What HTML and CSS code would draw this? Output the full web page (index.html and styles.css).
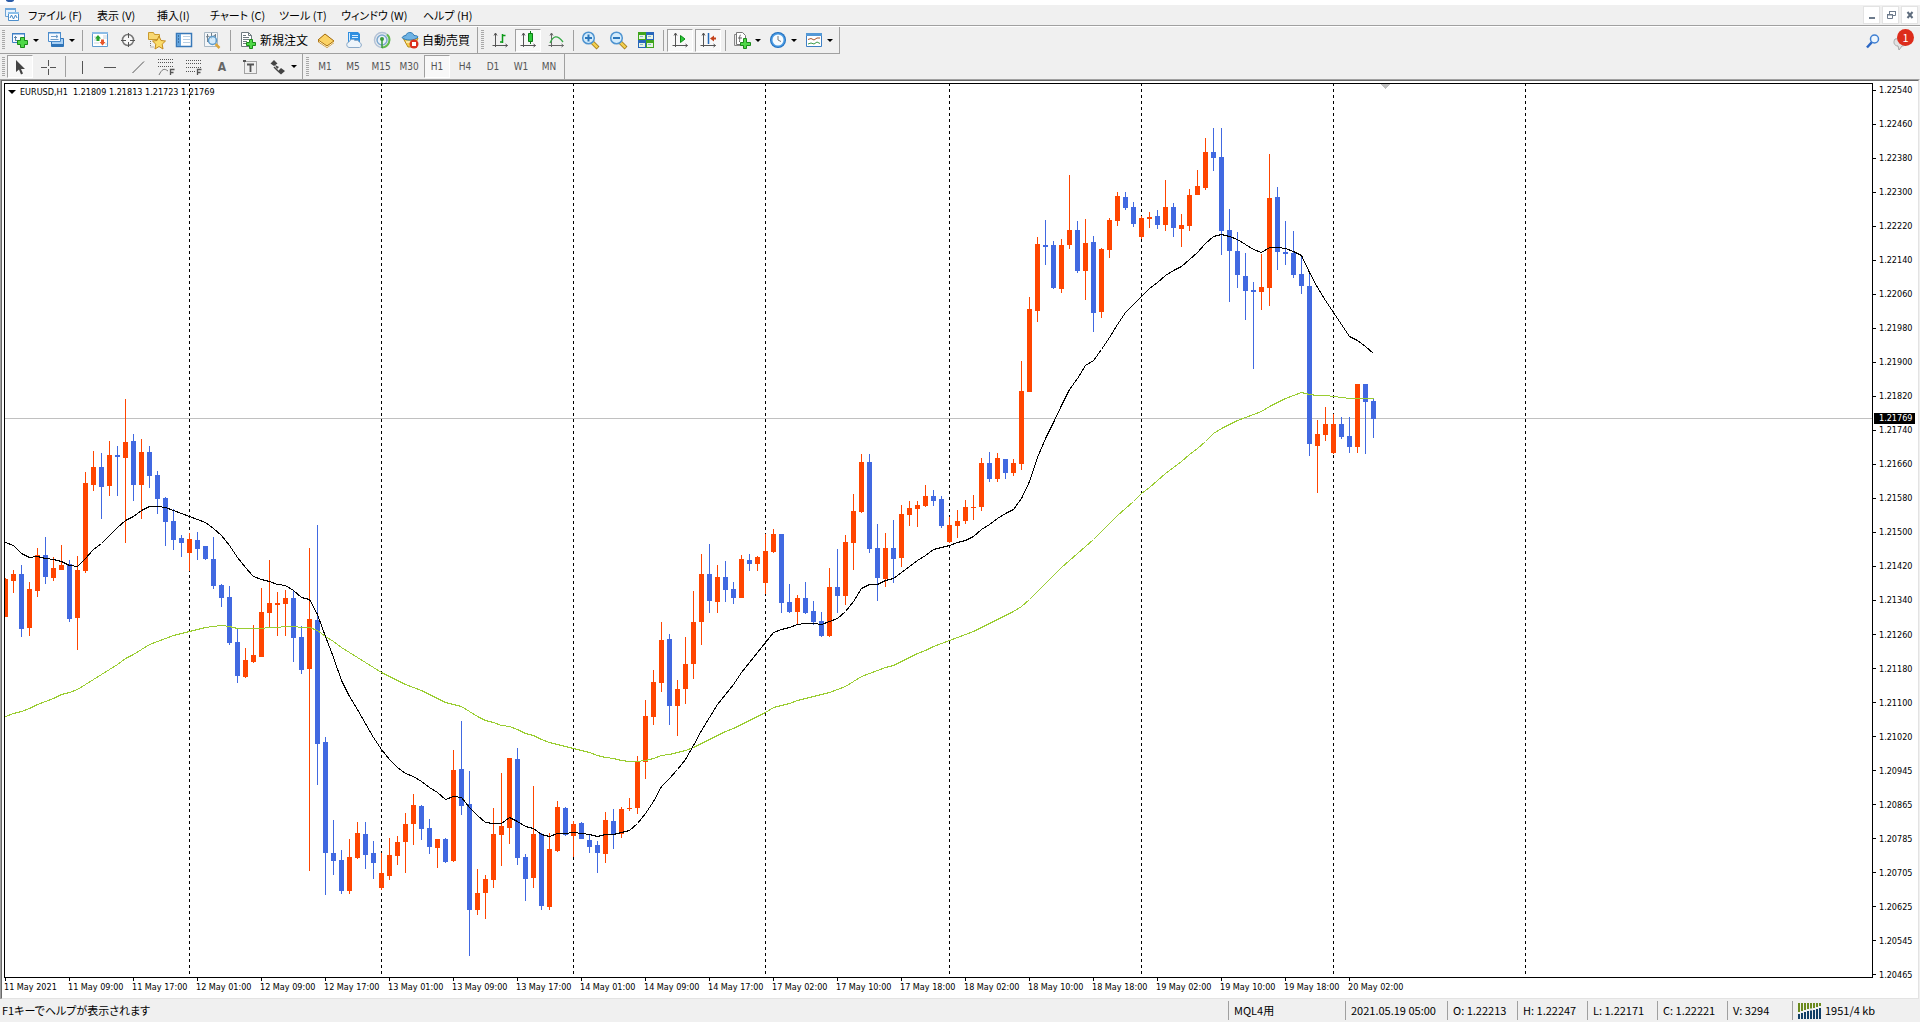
FILE: index.html
```html
<!DOCTYPE html>
<html lang="ja">
<head>
<meta charset="utf-8">
<title>EURUSD,H1</title>
<link rel="stylesheet" href="styles.css">
</head>
<body>
<div class="titlebar"><svg width="20" height="5" viewBox="0 0 20 5"><ellipse cx="10" cy="0" rx="4" ry="2" fill="#2a5ca8"/></svg></div>

<header class="menubar">
  <svg class="app-icon" width="16" height="16" viewBox="0 0 16 16"><path d="M1.500 1.500h10v8h-10z" fill="#eaf4fd" stroke="#6fa3d4"/><path d="M1 1h11v2H1z" fill="#6fa8dc"/><path d="M4.500 5.500h10v8h-10z" fill="#fff" stroke="#4d8fcc"/><path d="M4 5h11v2H4z" fill="#8cc0ea"/><path d="M6 11l1.500-3 2 4 2-4 1.500 3" fill="none" stroke="#3f86c6"/></svg>
  <nav class="menus">
    <button>ファイル (F)</button><button>表示 (V)</button><button>挿入(I)</button><button>チャート (C)</button><button>ツール (T)</button><button>ウィンドウ (W)</button><button>ヘルプ (H)</button>
  </nav>
  <div class="window-buttons">
    <button aria-label="最小化"><svg width="14" height="14" viewBox="0 0 14 14"><path d="M4 9h6v2H4z" fill="#6d7b8c"/></svg></button>
    <button aria-label="元に戻す"><svg width="14" height="14" viewBox="0 0 14 14"><path d="M5.500 6V3.500h6v4H9M3.500 6.500h5v4h-5z" fill="none" stroke="#6d7b8c"/><path d="M5 3h7v1H5zM3 6h6v1.500H3z" fill="#6d7b8c"/></svg></button>
    <button aria-label="閉じる"><svg width="14" height="14" viewBox="0 0 14 14"><path d="M4.500 4l5 6M9.500 4l-5 6" stroke="#5f6d7e" stroke-width="2"/></svg></button>
  </div>
</header>

<div class="toolbars">
  <div class="toolbar-row">
    <div class="toolbar standard">
      <i class="grip"></i>
      <button class="drop" aria-label="新規チャート"><svg viewBox="0 0 20 20"><path d="M2.500 3.500h12v9h-12z" fill="#f4f9ff" stroke="#3d7fc4"/><path d="M2 3h13v1.500H2z" fill="#3d7fc4"/><path d="M5.500 6v5M4 7.500h3M5 10.500h3" stroke="#5b84a8"/><path d="M10.500 7.500h4v3h3v4h-3v3h-4v-3h-3v-4h3z" fill="#4fd848" stroke="#1c8a1a"/></svg><i class="arrow"></i></button>
      <button class="drop" aria-label="プロファイル"><svg viewBox="0 0 20 20"><path d="M5.500 8.500h12v8h-12z" fill="#a9d0f4" stroke="#2f74b8"/><path d="M6 14h11v2H6z" fill="#2f74b8"/><path d="M2.500 2.500h12v9h-12z" fill="#f4f9ff" stroke="#4b8ccc"/><path d="M2 2h13v1.500H2z" fill="#4b8ccc"/><path d="M5 6.500h7M10 5l2 1.500L10 8M4.500 9.500h8" stroke="#6d9cc8" fill="none"/></svg><i class="arrow"></i></button>
      <i class="sep"></i>
      <button aria-label="気配値表示"><svg viewBox="0 0 20 20"><path d="M2.500 2.500h15v14h-15z" fill="#fff" stroke="#5f9bd0"/><path d="M2 2h16v2H2z" fill="#8dbce6"/><path d="M4 7h3m-3 3h3m-3 3h5m4-5h4m0-2h-4m2 8h2" stroke="#c9d5df"/><path d="M8 5l3 3.500H9.500V11h-3V8.500H5z" fill="#27a32b"/><path d="M12.500 15.500L9.500 12H11V9.500h3V12h1.500z" fill="#e8562a"/></svg></button>
      <button aria-label="データウィンドウ"><svg viewBox="0 0 20 20"><circle cx="10" cy="10" r="5.500" fill="#f8f8f8" stroke="#777" stroke-width="1.500"/><path d="M10.500 3v5M10.500 12v5M3 10.500h5M12 10.500h5" stroke="#555"/></svg></button>
      <button aria-label="ナビゲーター"><svg viewBox="0 0 20 20"><path d="M2.500 2.500h5l1 2h5v5h-11z" fill="#f8d873" stroke="#c99a2e"/><path d="M4.500 11v6h4" fill="none" stroke="#777" stroke-dasharray="1 1"/><path d="M13 6l2 4.500 4.500.5-3.300 3.200.8 4.800-4-2.500L9 19l.8-4.800L6.500 11l4.500-.5z" fill="#fbdc6a" stroke="#c48a1b"/></svg></button>
      <button aria-label="ターミナル"><svg viewBox="0 0 20 20"><path d="M2.500 3.500h15v13h-15z" fill="#fff" stroke="#3878b8" stroke-width="1.500"/><path d="M3 4h4v12H3z" fill="#62a3dd"/><path d="M4 6h1M4 9h1M4 12h1" stroke="#173c66"/><path d="M9 6.500h7M9 9.500h7M9 12.500h7" stroke="#b8cfe4"/></svg></button>
      <button aria-label="ストラテジーテスター"><svg viewBox="0 0 20 20"><path d="M2.500 2.500h13v14h-13z" fill="#f4f6f8" stroke="#a9b8c4"/><path d="M5.500 4v8M9.500 3v6M13.500 4v8M4 7l2-1 3 2 4-3" fill="none" stroke="#71808c"/><path d="M13.500 14l4 4" stroke="#dba63d" stroke-width="2.500"/><circle cx="10.500" cy="10.500" r="4" fill="#cce8fb" fill-opacity=".8" stroke="#5d9bcb" stroke-width="1.500"/></svg></button>
      <i class="sep"></i>
      <button class="labelled"><svg viewBox="0 0 20 20"><path d="M3.500 2.500h7l3 3v11h-10z" fill="#fff" stroke="#6e7a80"/><path d="M10.500 2.500v3h3M5 7.500h6M5 9.500h6M5 11.500h4M5 13.500h3M5 5.500h3" fill="none" stroke="#6e7a80"/><path d="M11.500 9.500h3v3h3v3h-3v3h-3v-3h-3v-3h3z" fill="#4fd848" stroke="#1c8a1a"/></svg><span>新規注文</span></button>
      <button aria-label="メタエディター"><svg viewBox="0 0 20 20"><path d="M2 10l7-6 9 7v2l-7 5-9-6z" fill="#b87a14"/><path d="M2 10l7-6 9 7-7 5z" fill="#fbd366" stroke="#a66f14"/><path d="M3 11.500l8 5.500 7-5" fill="none" stroke="#fff4c4"/></svg></button>
      <button aria-label="クラウド"><svg viewBox="0 0 20 20"><path d="M4 2h10l2 2v8H4z" fill="#2f8fe0"/><path d="M5.500 3v8M8 5.500h6M8 7.500h6" stroke="#d5ecff"/><path d="M5 17.500a2.800 2.800 0 0 1 0-5.500 3.500 3.500 0 0 1 6-1.500 3.500 3.500 0 0 1 4.500 2 2.600 2.600 0 0 1 0 5z" fill="#eef5fb" stroke="#8aa9c8"/></svg></button>
      <button aria-label="シグナル"><svg viewBox="0 0 20 20"><circle cx="10" cy="10" r="7.500" fill="none" stroke="#b3c2d6" stroke-width="1.500"/><circle cx="10" cy="10" r="5" fill="#e8f0f8" stroke="#7da8cf" stroke-width="1.500"/><path d="M10 17.500a7.500 7.500 0 0 0 5-13" fill="none" stroke="#62bb4d" stroke-width="2"/><circle cx="10" cy="9" r="2" fill="#3a9a3a"/><path d="M10 10v8" stroke="#3a9a3a" stroke-width="1.500"/></svg></button>
      <button class="labelled"><svg viewBox="0 0 20 20"><path d="M3 8l5 9h6l4-9z" fill="#f6cf4b" stroke="#b98a1c"/><path d="M6 12h5" stroke="#fff"/><path d="M2 7.500c1-1.500 3-2 4-2 .5-4 7-4 8 0 2 0 4 .5 4 1.500-3 4-13 4-16 .5z" fill="#6fb3e4" stroke="#2e79b4"/><circle cx="14" cy="14" r="4.500" fill="#dc2f1d"/><path d="M12 12h4v4h-4z" fill="#fff"/></svg><span>自動売買</span></button>
    </div>
    <div class="toolbar charts">
      <i class="grip"></i>
      <button aria-label="バーチャート"><svg viewBox="0 0 20 20"><path d="M5.500 3v14M2.500 15.500h15M4 5.500l1.500-2.500L7 5.500M15.500 14l2 1.500-2 1.500" fill="none" stroke="#555"/><path d="M12.500 4v9M12.500 5.500h3M10 12h2.500" fill="none" stroke="#0b9a18" stroke-width="1.500"/></svg></button>
      <button class="pressed" aria-label="ローソク足"><svg viewBox="0 0 20 20"><path d="M5.500 3v14M2.500 15.500h15M4 5.500l1.500-2.500L7 5.500M15.500 14l2 1.500-2 1.500" fill="none" stroke="#555"/><path d="M12.500 1v13" stroke="#0c7a14"/><path d="M10.500 3.500h4v8h-4z" fill="#2ecb3b" stroke="#0c7a14"/></svg></button>
      <button aria-label="ラインチャート"><svg viewBox="0 0 20 20"><path d="M5.500 3v14M2.500 15.500h15M4 5.500l1.500-2.500L7 5.500M15.500 14l2 1.500-2 1.500" fill="none" stroke="#666"/><path d="M4 13c3-7 7-9 13-1" fill="none" stroke="#35a845" stroke-width="1.300"/></svg></button>
      <i class="sep"></i>
      <button aria-label="ズームイン"><svg viewBox="0 0 20 20"><path d="M12 12l6 6" stroke="#9c7415" stroke-width="4"/><path d="M12 12l5.500 5.500" stroke="#f1ce4e" stroke-width="2.500"/><circle cx="8.500" cy="8" r="5.800" fill="#d4ecfc" stroke="#4f94d0" stroke-width="1.500"/><path d="M5 8h7M8.500 4.500v7" stroke="#2b76ba" stroke-width="2"/></svg></button>
      <button aria-label="ズームアウト"><svg viewBox="0 0 20 20"><path d="M12 12l6 6" stroke="#9c7415" stroke-width="4"/><path d="M12 12l5.500 5.500" stroke="#f1ce4e" stroke-width="2.500"/><circle cx="8.500" cy="8" r="5.800" fill="#d4ecfc" stroke="#4f94d0" stroke-width="1.500"/><path d="M5 8h7" stroke="#2b76ba" stroke-width="2"/></svg></button>
      <button aria-label="ウィンドウの整列"><svg viewBox="0 0 20 20"><path d="M2 2h8v8H2zM10 10h8v8h-8z" fill="#3fa51e"/><path d="M10 2h8v8h-8zM2 10h8v8H2z" fill="#2766ba"/><path d="M3 5h6v4H3zM11 5h6v4h-6zM3 13h6v4H3zM11 13h6v4h-6z" fill="#e8f4e2"/><path d="M4 6.500h3M12 6.500h3M4 14.500h3M12 14.500h3" stroke="#88b8d0"/></svg></button>
      <i class="sep"></i>
      <button class="pressed" aria-label="自動スクロール"><svg viewBox="0 0 20 20"><path d="M5.500 3v14M2.500 15.500h15M4 5.500l1.500-2.500L7 5.500M15.500 14l2 1.500-2 1.500" fill="none" stroke="#555"/><path d="M10.500 5.500l4.500 3.500-4.500 3.500z" fill="#2ecb3b" stroke="#0c8a14"/></svg></button>
      <button class="pressed" aria-label="チャートシフト"><svg viewBox="0 0 20 20"><path d="M5.500 3v14M2.500 15.500h15M4 5.500l1.500-2.500L7 5.500M15.500 14l2 1.500-2 1.500" fill="none" stroke="#555"/><path d="M10.500 3v11" stroke="#2469b8" stroke-width="1.500"/><path d="M12 8.500l4-3v2h2v2h-2v2z" fill="#c4431c"/></svg></button>
      <i class="sep"></i>
      <button class="drop" aria-label="インディケータ"><svg viewBox="0 0 20 20"><path d="M2.500 4.500h9v11h-9z" fill="#eee" stroke="#888"/><path d="M4.500 2.500h6l3 3v9h-9z" fill="#fff" stroke="#777"/><path d="M9 5c-2 0-1 3-1.500 7M6 8h4" fill="none" stroke="#666"/><path d="M11.500 8.500h3v4h4v3h-4v3h-3v-3h-3v-3h3z" fill="#4fd848" stroke="#1c8a1a"/></svg><i class="arrow"></i></button>
      <button class="drop" aria-label="時間足設定"><svg viewBox="0 0 20 20"><circle cx="10" cy="10" r="8" fill="#1f6fc0"/><circle cx="10" cy="10" r="7" fill="#4b9be2"/><circle cx="10" cy="10" r="5.500" fill="#f6fbff"/><path d="M10 6v4l3 1.500" fill="none" stroke="#777"/></svg><i class="arrow"></i></button>
      <button class="drop" aria-label="定型チャート"><svg viewBox="0 0 20 20"><path d="M2.500 3.500h15v13h-15z" fill="#fff" stroke="#3d7fc4"/><path d="M2 3h16v3H2z" fill="#5599d6"/><path d="M4 9.500l3-1 3 1.500 3-2h3" fill="none" stroke="#a6552c"/><path d="M4 14l3-1 3 1 3-2 3 1.500" fill="none" stroke="#3c9b4a"/></svg><i class="arrow"></i></button>
    </div>
    <div class="alerts">
      <button aria-label="検索"><svg viewBox="0 0 20 20"><path d="M9 11l-5 5.500" stroke="#2a66c4" stroke-width="2.500"/><circle cx="11.500" cy="8" r="4" fill="#eef6fd" stroke="#3f7fd2" stroke-width="1.500"/></svg></button>
      <button class="chat" aria-label="通知"><svg viewBox="0 0 20 20"><path d="M3 8c-2 3-1 7 3 7l1 4 3-4c5 0 6-6 3-8z" fill="#e2e2e2" stroke="#a8a8a8"/></svg><span class="badge">1</span></button>
    </div>
  </div>
  <div class="toolbar-row second">
    <div class="toolbar lines">
      <i class="grip"></i>
      <button class="pressed" aria-label="カーソル"><svg viewBox="0 0 20 20"><path d="M6 3v12l3-2.500 2 5 2-1-2-4.500h4z" fill="#444"/></svg></button>
      <button aria-label="十字カーソル"><svg viewBox="0 0 20 20"><path d="M10.500 3v6M10.500 12v6M3 10.500h6M12 10.500h6" stroke="#555"/></svg></button>
      <i class="sep"></i>
      <button aria-label="垂直線"><svg viewBox="0 0 20 20"><path d="M10.500 4v13" stroke="#555"/></svg></button>
      <button aria-label="水平線"><svg viewBox="0 0 20 20"><path d="M4 10.500h12" stroke="#555"/></svg></button>
      <button aria-label="トレンドライン"><svg viewBox="0 0 20 20"><path d="M4.500 16L16 4.500" stroke="#555"/></svg></button>
      <button aria-label="フィボナッチ"><svg viewBox="0 0 20 20"><path d="M2 2.500h16M2 5.500h16M2 9.500h16" stroke="#555" stroke-dasharray="1 1"/><path d="M3 18c3-6 5-7 9-4" fill="none" stroke="#777"/><path d="M14.500 18v-5.500h4M14.500 15.500h3" fill="none" stroke="#555" stroke-width="1.300"/></svg></button>
      <button aria-label="フィボナッチファン"><svg viewBox="0 0 20 20"><path d="M2 3.500h15M2 6.500h15M2 10.500h15M2 14.500h10" stroke="#555" stroke-dasharray="1 1"/><path d="M13.500 18v-5.500h4M13.500 15.500h3" fill="none" stroke="#555" stroke-width="1.300"/></svg></button>
      <button class="letter" aria-label="テキスト">A</button>
      <button aria-label="テキストラベル"><svg viewBox="0 0 20 20"><path d="M4.500 4.500h12v12h-12z" fill="none" stroke="#555" stroke-dasharray="1 1"/><path d="M3 3h3v2H3z" fill="#555"/><path d="M7 7.500h7M10.500 7v8" stroke="#555" stroke-width="1.800"/></svg></button>
      <button class="drop" aria-label="矢印"><svg viewBox="0 0 20 20"><path d="M6 3l3.500 3.500L6 9 2.500 6.500zM7 8l4 2-2 2zM13 11l4 3-4 3.500-3.500-3z" fill="#444"/><path d="M6 10l4 4" stroke="#444" stroke-width="1.500"/></svg><i class="arrow"></i></button>
    </div>
    <div class="toolbar periods">
      <i class="grip"></i>
      <button>M1</button><button>M5</button><button>M15</button><button>M30</button><button class="pressed">H1</button><button>H4</button><button>D1</button><button>W1</button><button>MN</button>
    </div>
  </div>
</div>

<main class="chart-window">
  <div class="chart-grid">
    <section class="plot">
      <svg id="chart" viewBox="5 84 1867 893" preserveAspectRatio="none" shape-rendering="crispEdges" role="img" aria-label="EURUSD,H1"></svg>
      <h1 class="chart-title"><i class="arrow"></i>EURUSD,H1 &nbsp;1.21809 1.21813 1.21723 1.21769</h1>
    </section>
    <div class="price-scale">
      <ol>
        <li>1.22540</li><li>1.22460</li><li>1.22380</li><li>1.22300</li><li>1.22220</li><li>1.22140</li><li>1.22060</li><li>1.21980</li><li>1.21900</li><li>1.21820</li><li>1.21740</li><li>1.21660</li><li>1.21580</li><li>1.21500</li><li>1.21420</li><li>1.21340</li><li>1.21260</li><li>1.21180</li><li>1.21100</li><li>1.21020</li><li>1.20945</li><li>1.20865</li><li>1.20785</li><li>1.20705</li><li>1.20625</li><li>1.20545</li><li>1.20465</li>
      </ol>
      <span class="price-tag">1.21769</span>
    </div>
    <ol class="time-scale">
      <li>11 May 2021</li><li>11 May 09:00</li><li>11 May 17:00</li><li>12 May 01:00</li><li>12 May 09:00</li><li>12 May 17:00</li><li>13 May 01:00</li><li>13 May 09:00</li><li>13 May 17:00</li><li>14 May 01:00</li><li>14 May 09:00</li><li>14 May 17:00</li><li>17 May 02:00</li><li>17 May 10:00</li><li>17 May 18:00</li><li>18 May 02:00</li><li>18 May 10:00</li><li>18 May 18:00</li><li>19 May 02:00</li><li>19 May 10:00</li><li>19 May 18:00</li><li>20 May 02:00</li>
    </ol>
  </div>
</main>

<footer class="statusbar">
  <span class="hint">F1キーでヘルプが表示されます</span>
  <span class="cell profile">MQL4用</span>
  <span class="cell date">2021.05.19 05:00</span>
  <span class="cell ohlc">O: 1.22213</span>
  <span class="cell ohlc">H: 1.22247</span>
  <span class="cell ohlc">L: 1.22171</span>
  <span class="cell ohlc">C: 1.22221</span>
  <span class="cell volume">V: 3294</span>
  <span class="cell traffic"><svg width="23" height="16" viewBox="0 0 23 16"><path d="M1 0v9M4 0v8M7 0v7M10 0v6M13 0v5.500M16 0v5M19 0v4M22 0v3" stroke="#6b8a1e" stroke-width="2"/><path d="M1 16v-5M4 16v-6M7 16v-7M10 16v-8M13 16V7.500M16 16V7M19 16V6M22 16V5" stroke="#123f66" stroke-width="2"/></svg>1951/4 kb</span>
</footer>
<script src="chart.js"></script>
</body>
</html>
```
FILE: styles.css
```css
* { box-sizing: border-box; }
body {
  margin: 0;
  height: 100vh;
  display: flex;
  flex-direction: column;
  background: #f0f0f0;
  color: #000;
  font: 12px/16px "Noto Sans CJK JP", sans-serif;
  font-feature-settings: "palt";
  overflow: hidden;
}
button {
  margin: 0;
  padding: 0;
  border: 0;
  background: none;
  color: inherit;
  font: inherit;
  font-feature-settings: inherit;
}
ol { margin: 0; padding: 0; list-style: none; }
svg { display: block; }

.titlebar { flex: none; height: 5px; background: #fff; }

.menubar {
  flex: none;
  height: 21px;
  display: flex;
  align-items: center;
  padding: 0 2px 0 4px;
  border-bottom: 1px solid #a0a0a0;
}
.menus {
  margin-left: 8px;
  display: grid;
  grid-template-columns: 69px 60px 53px 69px 62px 82px 60px;
  flex: 1;
  font-size: 11px;
}
.menus button { text-align: left; white-space: nowrap; }
.window-buttons { display: flex; gap: 2px; }
.window-buttons button {
  width: 17px;
  height: 18px;
  display: grid;
  place-items: center;
  background: #fff;
  border: 1px solid #e3e3e3;
}

.toolbars { flex: none; border-top: 1px solid #fff; }
.toolbar-row { display: flex; height: 27px; }
.toolbar-row.second { height: 25px; }
.toolbar {
  display: flex;
  align-items: center;
  border-right: 1px solid #a0a0a0;
  border-bottom: 1px solid #a0a0a0;
}
.second .toolbar { border-bottom: 0; }
.standard { padding-right: 3px; }
.charts { padding-right: 3px; }
.lines { padding-right: 2px; }
.periods { padding-right: 1px; }
.toolbar .grip {
  width: 3px;
  height: 20px;
  margin: 0 1px 0 2px;
  background: repeating-linear-gradient(#a8a8a8 0 1px, #f0f0f0 1px 2px);
}
.charts .grip, .periods .grip { margin: 0 2px 0 3px; }
.toolbar .sep { width: 6px; height: 21px; background: linear-gradient(#a0a0a0, #a0a0a0) 3px 0 / 1px 100% no-repeat; }
.standard .sep { width: 8px; background-position: 4px 0; }
.toolbar button {
  width: 28px;
  height: 23px;
  display: flex;
  align-items: center;
  justify-content: center;
}
.toolbar svg { flex: none; width: 20px; height: 20px; }
.toolbar .drop { width: 36px; justify-content: flex-start; padding-left: 4px; gap: 3px; }
.toolbar .labelled { width: 78px; justify-content: flex-start; padding-left: 4px; gap: 2px; white-space: nowrap; }
.arrow {
  flex: none;
  width: 5px;
  border: solid transparent;
  border-width: 3px 3px 0;
  border-top-color: #000;
}
.toolbar .pressed {
  width: 26px;
  margin: 0 1px;
  background: #f8f8f8;
  border: 1px solid #fff;
  border-top-color: #a0a0a0;
  border-left-color: #a0a0a0;
}
.toolbar .letter { font: bold 12px/16px "DejaVu Sans Condensed", sans-serif; color: #666; }
.periods button { font: 10px/16px "DejaVu Sans Condensed", "DejaVu Sans", sans-serif; color: #555; }
.alerts { margin-left: auto; display: flex; align-items: center; gap: 9px; padding-right: 8px; }
.alerts svg { width: 20px; height: 20px; }
.chat { position: relative; }
.badge {
  position: absolute;
  top: -2px;
  right: -2px;
  width: 17px;
  height: 17px;
  border-radius: 50%;
  background: #dd2c1b;
  color: #fff;
  font-size: 11px;
  line-height: 17px;
  text-align: center;
}

.chart-window {
  flex: 1;
  min-height: 0;
  display: flex;
  border: 1px solid #a0a0a0;
  border-right-color: #f0f0f0;
  border-bottom: 0;
}
.chart-grid {
  flex: 1;
  min-width: 0;
  display: grid;
  grid-template: minmax(0, 1fr) 20px / minmax(0, 1fr) 45px;
  padding: 2px 0 0 2px;
  background: #fff;
  border: 1px solid #696969;
  border-right-color: #e3e3e3;
  border-bottom-color: #e3e3e3;
  font: 9px/10px "DejaVu Sans Condensed", "DejaVu Sans", sans-serif;
}
.plot { position: relative; border: 1px solid #000; }
.plot svg { width: 100%; height: 100%; }
.chart-title {
  position: absolute;
  top: 3px;
  left: 3px;
  margin: 0;
  display: flex;
  align-items: center;
  gap: 4px;
  font: inherit;
}
.chart-title .arrow { width: 7px; border-width: 4px 4px 0; }

.price-scale { position: relative; grid-row: 1 / 3; grid-column: 2; display: flex; padding: 2px 0 18px; }
.price-scale ol { display: flex; flex-direction: column; justify-content: space-between; }
.price-scale li { display: flex; align-items: center; gap: 3px; }
.price-scale li::before { content: ""; width: 3px; height: 1px; background: #000; }
.price-tag {
  position: absolute;
  top: 330px;
  left: 1px;
  width: 41px;
  padding-left: 5px;
  background: #000;
  color: #fff;
  line-height: 11px;
}
.time-scale { display: flex; overflow: hidden; }
.time-scale li { flex: none; width: 64px; white-space: nowrap; }
.time-scale li::before { content: ""; display: block; width: 1px; height: 3px; margin: 0 0 1px 1px; background: #000; }

.statusbar {
  flex: none;
  height: 23px;
  display: flex;
  align-items: stretch;
  padding: 2px 0 2px 2px;
  font-size: 11px;
  line-height: 19px;
  white-space: nowrap;
}
.hint { flex: 1; }
.cell { border-left: 1px solid #a0a0a0; padding-left: 5px; }
.profile { width: 117px; }
.date { width: 102px; }
.ohlc { width: 70px; }
.volume { width: 65px; }
.traffic { width: 128px; display: flex; align-items: center; gap: 4px; }

.guide { stroke: #000; stroke-dasharray: 3 3; stroke-dashoffset: 1; }
.current { fill: #c0c0c0; }
.up { fill: #ff4500; }
.down { fill: #4169e1; }
.fast { fill: none; stroke: #000; }
.slow { fill: none; stroke: #9acd32; }
```
FILE: chart.js
```js
// One bar per entry: direction, high, body top, body bottom, low (chart units).
const bars = `R578,579,617,617 R570,574,581,593 B565,574,629,637 R582,589,628,636 R548,555,591,597 B537,555,577,584 R557,568,578,581 R545,565,570,570 B560,564,619,622 R556,570,618,650
R472,483,571,573 R451,467,485,491 B453,467,487,519 R441,455,486,496 B446,455,457,496 R399,442,458,543 B434,441,485,501 R439,452,485,519 B446,452,476,488 B471,475,499,514
B497,498,522,546 B509,521,540,550 B535,538,543,557 R533,539,553,571 B532,540,549,560 B546,546,559,560 B537,559,586,589 B584,585,598,607 B586,597,643,645 B628,642,676,683
R648,660,677,678 R625,655,662,663 R588,612,657,657 R560,603,613,628 R592,603,605,636 R590,598,604,636 B590,598,638,662 B626,637,670,674 R548,619,669,871 B525,620,744,785
B737,742,853,895 B820,853,861,875 B850,860,891,894 R839,857,891,894 R822,833,858,859 B822,834,855,869 B841,853,863,879 R853,873,888,890 R838,855,876,880 R836,842,856,865
R813,824,842,873 R794,805,824,845 B805,806,829,840 B819,828,847,854 R839,839,848,868 B838,839,862,863 R750,770,861,862 B721,769,806,815 B771,804,910,956 R869,893,910,915
R875,879,893,919 R808,834,880,888 R773,826,835,866 R758,758,828,844 B748,759,858,865 B854,857,879,901 R786,834,878,888 B833,834,906,910 R833,849,907,910 R801,807,851,852
B807,808,835,836 R821,824,836,857 B822,823,839,839 B835,840,847,853 B841,845,853,873 R812,820,854,863 B809,821,834,849 R807,809,834,838 R798,808,809,811 R756,761,808,814
R700,716,762,779 R670,682,717,725 R622,640,683,692 B634,639,706,725 R680,689,706,736 R637,664,689,704 R591,622,664,679 R554,574,622,645 B544,574,601,613 R565,577,602,613
B561,577,590,602 B582,589,598,604 R555,559,598,598 B554,560,564,571 R556,557,564,571 R534,551,583,594 R529,534,552,553 B534,534,603,613 B584,602,612,613 R595,598,612,625
B582,598,613,614 B601,611,622,625 B612,621,636,637 R568,587,636,637 B549,587,596,613 R535,542,596,605 R494,511,543,570 R454,462,512,513 B454,462,549,553 B524,548,578,601
R533,548,579,587 B520,548,559,583 R505,514,558,567 R501,508,515,526 R501,505,509,527 R485,496,506,507 B490,496,501,506 B496,499,526,528 R517,525,542,543 R510,521,526,538
R500,507,521,524 R495,507,508,520 R458,463,507,511 B452,463,479,482 R453,458,479,482 B459,459,473,479 R459,463,473,476 R361,391,464,470 R297,309,392,392 R237,244,311,322
B220,245,247,265 B241,245,288,289 R239,245,289,293 R175,230,245,249 B221,230,271,273 R219,243,271,300 B236,242,313,332 R248,249,312,318 R218,220,250,258 R192,196,221,226
B192,197,208,210 B202,207,224,227 R216,218,237,239 R212,217,219,228 B210,216,225,229 R180,207,225,231 B203,207,228,237 R214,225,229,247 R189,195,226,231 R170,186,195,195
R138,152,188,190 B128,152,158,171 B128,157,231,255 B209,230,251,302 B232,251,275,288 B253,276,291,320 B282,290,292,369 R254,287,292,310 R154,198,288,306 B187,197,252,270
B221,252,254,265 B231,253,275,278 B257,274,286,294 B274,286,444,456 R420,434,446,493 R407,424,435,441 R414,424,453,454 B417,424,437,439 B417,436,447,453 R384,384,447,453
B384,384,402,454 B399,401,419,438`.split(/\s+/);

const fast = [542,545,553,557,556,558,559,561,565,566,558,549,543,535,527,520,516,510,506,506,507,510,513,516,519,522,528,535,545,557,567,576,579,581,584,585,590,597,599,614,
636,657,680,696,709,723,737,749,759,767,773,776,781,787,792,799,796,797,807,815,822,823,823,817,821,826,828,834,836,833,833,832,833,834,836,834,834,832,830,823,
813,801,786,778,769,759,745,730,717,704,694,684,672,662,652,642,632,629,627,624,623,623,624,621,618,611,601,588,584,584,580,578,572,566,560,555,549,547,545,542,
540,536,529,524,518,513,509,498,481,457,438,422,405,389,378,365,360,349,337,324,312,304,296,288,282,275,270,266,259,252,243,236,234,236,239,244,249,252,247,247,
248,251,255,272,287,300,312,324,336,340,346,353];

const slow = [716,713,711,708,704,701,698,694,692,689,684,679,674,669,664,658,654,649,644,641,638,635,633,631,629,627,626,625,626,628,628,628,628,627,627,626,626,627,627,630,
636,641,647,652,657,662,667,672,676,680,684,687,690,694,698,702,704,706,711,716,720,722,725,726,729,733,735,739,742,744,746,748,750,752,755,757,758,760,761,761,
760,758,755,754,752,750,747,743,739,735,731,728,724,720,716,712,707,705,703,700,698,696,694,692,689,686,681,676,673,670,667,665,661,657,653,650,646,643,640,637,
634,631,627,623,619,615,611,606,599,591,583,575,567,560,553,546,539,531,523,515,508,501,493,487,480,473,467,461,454,448,441,433,428,424,420,417,414,411,406,402,
398,395,392,394,395,395,396,397,398,398,398,398];

const barX = i => 5 + 8 * i;
const line = (values, name) =>
  `<polyline class="${name}" points="${values.map((y, i) => `${barX(i) + 0.5},${y + 0.5}`).join(' ')}"/>`;

let out = '<rect class="current" x="5" y="418" width="1867" height="1"/>';
for (const x of [189, 381, 573, 765, 949, 1141, 1333, 1525]) {
  out += `<path class="guide" d="M${x + 0.5} 84V977"/>`;
}
bars.forEach((bar, i) => {
  const [high, top, bottom, low] = bar.slice(1).split(',').map(Number);
  const x = barX(i);
  out += `<path class="${bar[0] === 'R' ? 'up' : 'down'}" d="M${x} ${high}h1V${low}h-1zM${x - 2} ${top}h5V${Math.max(bottom, top + 1)}h-5z"/>`;
});
out += line(slow, 'slow') + line(fast, 'fast');
out += '<path class="current" d="M1381 84h9v1h-1v1h-1v1h-1v1h-1v1h-1v-1h-1v-1h-1v-1h-1v-1h-1z"/>';
document.getElementById('chart').innerHTML = out;
```
